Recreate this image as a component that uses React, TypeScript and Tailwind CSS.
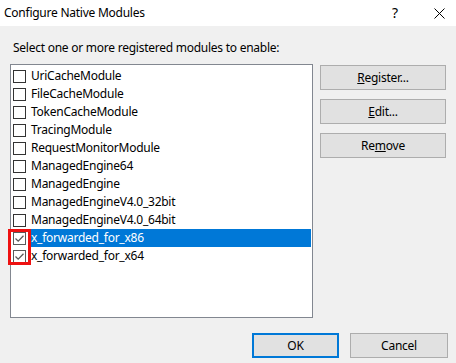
import React from 'react';

type ModuleItem = {
  name: string;
  checked: boolean;
  selected?: boolean;
};

const modules: ModuleItem[] = [
  { name: "UriCacheModule", checked: false },
  { name: "FileCacheModule", checked: false },
  { name: "TokenCacheModule", checked: false },
  { name: "TracingModule", checked: false },
  { name: "RequestMonitorModule", checked: false },
  { name: "ManagedEngine64", checked: false },
  { name: "ManagedEngine", checked: false },
  { name: "ManagedEngineV4.0_32bit", checked: false },
  { name: "ManagedEngineV4.0_64bit", checked: false },
  { name: "x_forwarded_for_x86", checked: true, selected: true },
  { name: "x_forwarded_for_x64", checked: true },
];

const CheckBox = ({ checked }: { checked: boolean }) => (
  <div
    className={`w-[13px] h-[13px] shrink-0 bg-white border flex items-center justify-center ${
      checked ? 'border-[#5a5a5a]' : 'border-[#333333]'
    }`}
  >
    {checked && (
      <svg width="11" height="11" viewBox="0 0 11 11">
        <path d="M1.5 5.5 L4.2 8.2 L9.5 2.8" fill="none" stroke="#5a5a5a" strokeWidth="1.3" />
      </svg>
    )}
  </div>
);

const SideButton = ({ children }: { children: React.ReactNode }) => (
  <div className="h-[25px] w-[126px] bg-[#e1e1e1] border border-[#adadad] flex items-center justify-center">
    {children}
  </div>
);

export default function App() {
  return (
    <div
      className="w-[456px] h-[363px] bg-[#f0f0f0] flex flex-col text-[12px] tracking-[-0.25px] text-black"
      style={{ fontFamily: '"Segoe UI", "Noto Sans", sans-serif' }}
    >
      {/* title bar */}
      <div className="h-[26px] bg-white flex items-center pl-[4px] shrink-0">
        <span className="leading-[16px]">Configure Native Modules</span>
        <span className="ml-auto w-[14px] text-center text-[14px] leading-[16px]">?</span>
        <div className="w-[34px] h-[26px] flex items-center justify-center ml-[20px]">
          <svg width="11" height="11" viewBox="0 0 11 11">
            <path d="M0.5 0.5 L10.5 10.5 M10.5 0.5 L0.5 10.5" stroke="#000" strokeWidth="1" />
          </svg>
        </div>
      </div>

      <div className="flex flex-col pl-[13px] pt-[14px]">
        <div className="leading-[16px] h-[16px]">Select one or more registered modules to enable:</div>
      </div>

      <div className="flex mt-[8px] pl-[10px]">
        <div className="relative w-[303px] h-[254px] bg-white border border-[#828790] pt-[2px] pl-[2px] pr-[1px]">
          {modules.map(m => (
            <div key={m.name} className="h-[18px] flex items-center">
              <CheckBox checked={m.checked} />
              <div
                className={`flex-1 h-[18px] flex items-center ml-[4px] pl-[1px] ${
                  m.selected ? 'bg-[#0078d7] text-white' : ''
                }`}
              >
                {m.name}
              </div>
            </div>
          ))}
          {/* annotation highlight */}
          <div className="absolute left-[-3px] top-[164px] w-[23px] h-[36px] border-[3px] border-[#ee1111]" />
        </div>

        <div className="flex flex-col gap-[9px] ml-[7px] mt-[1px]">
          <SideButton>
            <span><u>R</u>egister...</span>
          </SideButton>
          <SideButton>
            <span><u>E</u>dit...</span>
          </SideButton>
          <SideButton>
            <span>Re<u>m</u>ove</span>
          </SideButton>
        </div>
      </div>

      <div className="flex justify-end gap-[11px] pr-[8px] mt-[15px]">
        <div className="h-[25px] w-[87px] bg-[#e1e1e1] border-2 border-[#0078d7] flex items-center justify-center">
          OK
        </div>
        <div className="h-[25px] w-[98px] bg-[#e1e1e1] border border-[#adadad] flex items-center justify-center">
          Cancel
        </div>
      </div>
    </div>
  );
}
